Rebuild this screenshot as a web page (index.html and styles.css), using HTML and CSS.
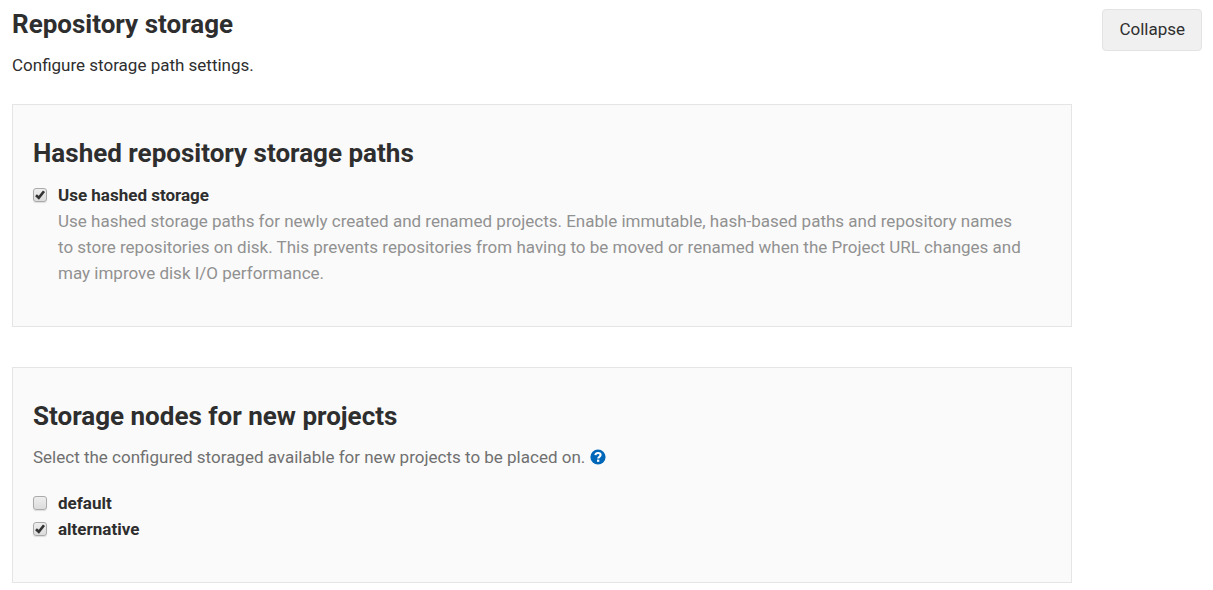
FILE: index.html
```html
<!DOCTYPE html>
<html lang="en">
<head>
<meta charset="utf-8">
<title>Repository storage</title>
<link rel="stylesheet" href="styles.css">
</head>
<body>
<section class="settings">
  <header class="settings-header">
    <div>
      <h2 class="title">Repository storage</h2>
      <p class="intro">Configure storage path settings.</p>
    </div>
    <button class="btn" type="button">Collapse</button>
  </header>
  <form class="settings-content">
    <fieldset class="panel">
      <h3 class="title">Hashed repository storage paths</h3>
      <div class="option">
        <input class="check" type="checkbox" id="hashed" aria-describedby="hashed-help" checked>
        <div>
          <label class="option-label" for="hashed">Use hashed storage</label>
          <p class="help" id="hashed-help">Use hashed storage paths for newly created and renamed projects. Enable immutable, hash-based paths and repository names<br> to store repositories on disk. This prevents repositories from having to be moved or renamed when the Project URL changes and<br> may improve disk I/O performance.</p>
        </div>
      </div>
    </fieldset>
    <fieldset class="panel">
      <h3 class="title">Storage nodes for new projects</h3>
      <p class="description">Select the configured storaged available for new projects to be placed on.
        <a class="help-link" href="#help" aria-label="Help"><svg class="help-icon" viewBox="0 0 16 16" aria-hidden="true"><circle cx="8" cy="8" r="7.6" fill="#0067b8"/><path d="M5.300 6.100C5.600 4.700 6.500 4 8 4c1.600 0 2.600.8 2.600 2.100 0 1.700-2.400 1.700-2.400 3.400" fill="none" stroke="#fff" stroke-width="2.100"/><path d="M7 10.600h2.300v2.200H7z" fill="#fff"/></svg></a></p>
      <div class="option">
        <input class="check" type="checkbox" id="default">
        <label class="option-label" for="default">default</label>
      </div>
      <div class="option">
        <input class="check" type="checkbox" id="alternative" checked>
        <label class="option-label" for="alternative">alternative</label>
      </div>
    </fieldset>
  </form>
</section>
</body>
</html>
```
FILE: styles.css
```css
* { box-sizing: border-box; }
body {
  margin: 0;
  background: #fff;
  color: #2e2e2e;
  font: 17px/26px Roboto, "Noto Sans", sans-serif;
}
h2, h3, p { margin: 0; }
.settings { padding: 9px 11px 0 12px; }
.settings-header {
  display: flex;
  justify-content: space-between;
  align-items: flex-start;
}
.title { font-size: 26px; line-height: 30px; font-weight: 700; }
.intro { margin-top: 13px; }
.btn {
  padding: 6px 16px 8px;
  border: 1px solid #e3e3e3;
  border-radius: 4px;
  background: #f0f0f0;
  color: #2e2e2e;
  font: inherit;
}
.settings-content {
  display: flex;
  flex-direction: column;
  gap: 40px;
  margin: 26px 130px 0 0;
}
.panel {
  min-width: 0;
  margin: 0;
  padding: 33px 20px 40px;
  border: 1px solid #e5e5e5;
  background: #fafafa;
}
.option { display: flex; gap: 11px; align-items: flex-start; }
.title + .option { margin-top: 14px; }
.option-label { display: block; font-weight: 700; }
.help { color: #919191; }
.description { margin: 13px 0 20px; color: #707070; }
.check {
  flex: none;
  appearance: none;
  width: 14px;
  height: 14px;
  margin: 6px 0 0;
  border: 1px solid #aaa;
  border-radius: 3px;
  background: linear-gradient(#eee, #dcdcdc);
  box-shadow: 0 1px 1px #ddd;
}
.check:checked {
  background:
    url("data:image/svg+xml,%3Csvg xmlns='http://www.w3.org/2000/svg' viewBox='0 0 12 12'%3E%3Cpath d='M2 6.200l2.800 2.600L10 2.200' fill='none' stroke='%23333' stroke-width='2.600'/%3E%3C/svg%3E") center / 12px 12px no-repeat,
    linear-gradient(#eee, #dcdcdc);
}
.help-icon { display: inline-block; width: 16px; height: 16px; vertical-align: -2px; }
```
